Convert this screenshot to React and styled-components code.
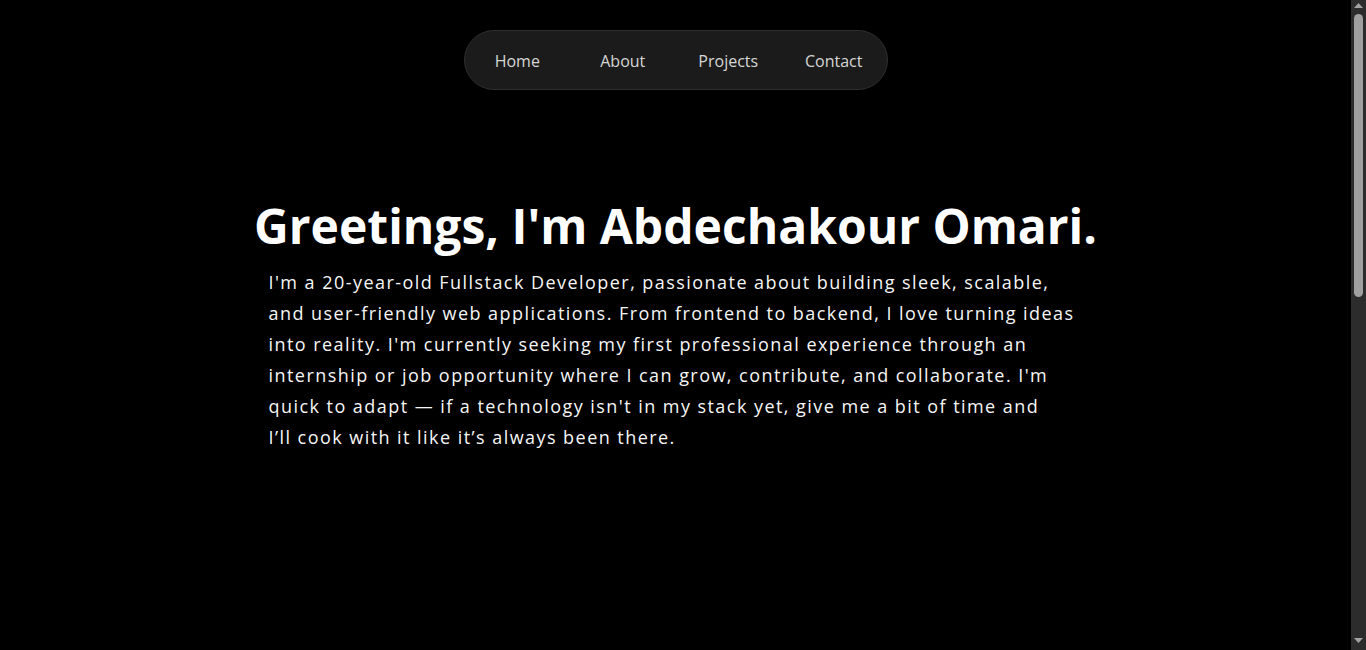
import styled, { createGlobalStyle } from 'styled-components'

const GlobalStyle = createGlobalStyle`
    html, body {
        margin: 0;
        padding: 0;
        background: #000;
        color: #fff;
        font-family: "Open Sans", "Noto Sans", sans-serif;
        overflow: hidden;
    }
`

const Shell = styled.div`
    display: flex;
    flex-direction: row;
    height: 100vh;
`

const Main = styled.main`
    flex: 1;
    min-width: 0;
    overflow: hidden;
    display: flex;
    flex-direction: column;
    align-items: center;
`

const ScrollTrack = styled.div`
    width: 15px;
    flex: none;
    display: flex;
    flex-direction: column;
    background: #2c2c2c;
`

const ScrollButton = styled.div`
    height: 14px;
    display: flex;
    justify-content: center;
    align-items: ${(p) => (p.$down ? 'flex-end' : 'flex-start')};
    padding: ${(p) => (p.$down ? '0 0 7px 0' : '3px 0 0 0')};
    box-sizing: border-box;
`

const ScrollThumb = styled.div`
    height: 283px;
    margin: 0 3px;
    border-radius: 5px;
    background: #a0a0a0;
`

const ScrollRest = styled.div`
    flex: 1;
`

const Navbar = styled.nav`
    margin-top: 30px;
    display: flex;
    flex-direction: row;
    align-items: center;
    height: 58px;
    background-color: #1b1b1b;
    border: 1px solid #2e2e2e;
    border-radius: 30px;
`

const NavLink = styled.a`
    width: 105.5px;
    padding-top: 2px;
    text-align: center;
    font-size: 16px;
    color: #d6d6d6;
    text-decoration: none;
    cursor: pointer;
`

const Hero = styled.section`
    margin-top: 104px;
    display: flex;
    flex-direction: column;
    align-items: center;
`

const Title = styled.h1`
    margin: 0;
    font-size: 48px;
    font-weight: 700;
    line-height: 64px;
    color: #fff;
    white-space: nowrap;
`

const Intro = styled.p`
    margin: 9px 0 0 0;
    width: 814px;
    font-size: 18px;
    line-height: 31px;
    letter-spacing: 1.45px;
    color: #f6f6f6;
`

const Line = styled.span`
    display: block;
    white-space: nowrap;
`

const links = ['Home', 'About', 'Projects', 'Contact']

const lines = [
    "I'm a 20-year-old Fullstack Developer, passionate about building sleek, scalable,",
    'and user-friendly web applications. From frontend to backend, I love turning ideas',
    "into reality. I'm currently seeking my first professional experience through an",
    "internship or job opportunity where I can grow, contribute, and collaborate. I'm",
    "quick to adapt \u2014 if a technology isn't in my stack yet, give me a bit of time and",
    'I\u2019ll cook with it like it\u2019s always been there.',
]

function App() {
    return (
        <>
            <GlobalStyle />
            <Shell>
                <Main>
                    <Navbar>
                        {links.map((l) => (
                            <NavLink key={l}>{l}</NavLink>
                        ))}
                    </Navbar>
                    <Hero>
                        <Title>Greetings, I'm Abdechakour Omari.</Title>
                        <Intro>
                            {lines.map((t, i) => (
                                <Line key={i}>{t}</Line>
                            ))}
                        </Intro>
                    </Hero>
                </Main>
                <ScrollTrack>
                    <ScrollButton>
                        <svg width="9" height="5" viewBox="0 0 9 5">
                            <polygon points="4.5,0 9,5 0,5" fill="#a3a3a3" />
                        </svg>
                    </ScrollButton>
                    <ScrollThumb />
                    <ScrollRest />
                    <ScrollButton $down>
                        <svg width="9" height="5" viewBox="0 0 9 5">
                            <polygon points="0,0 9,0 4.5,5" fill="#a3a3a3" />
                        </svg>
                    </ScrollButton>
                </ScrollTrack>
            </Shell>
        </>
    )
}

export default App
